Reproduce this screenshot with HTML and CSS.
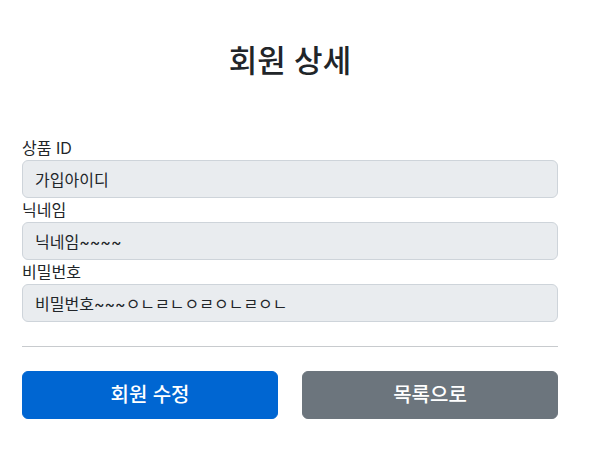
FILE: index.html
```html
<!DOCTYPE html>
<html lang="ko">
<head>
<meta charset="utf-8">
<title>회원 상세</title>
<link rel="stylesheet" href="styles.css">
</head>
<body>
<div class="container">
  <div class="page-header">
    <h2>회원 상세</h2>
  </div>
  <form class="detail-form">
    <div class="field">
      <label for="loginId">상품 ID</label>
      <input type="text" id="loginId" class="form-control" value="가입아이디" readonly>
    </div>
    <div class="field">
      <label for="nickname">닉네임</label>
      <input type="text" id="nickname" class="form-control" value="닉네임~~~~" readonly>
    </div>
    <div class="field">
      <label for="password">비밀번호</label>
      <input type="text" id="password" class="form-control" value="비밀번호~~~ㅇㄴㄹㄴㅇㄹㅇㄴㄹㅇㄴ" readonly>
    </div>
    <hr class="divider">
    <div class="actions">
      <button type="button" class="btn btn-primary">회원 수정</button>
      <button type="button" class="btn btn-secondary">목록으로</button>
    </div>
  </form>
</div>
</body>
</html>
```
FILE: styles.css
```css
* {
  box-sizing: border-box;
}

body {
  margin: 0;
  padding-right: 20px;
  background: #fff;
  color: #212529;
  font-family: "Inter", "Noto Sans CJK KR", "Noto Sans", sans-serif;
  font-size: 16px;
  line-height: 1.5;
}

.container {
  max-width: 560px;
  margin: 0 auto;
  padding: 0 12px;
}

.page-header {
  padding: 42px 0 56px;
  text-align: center;
}

.page-header h2 {
  margin: 0;
  font-size: 31px;
  font-weight: 500;
  line-height: 38px;
}

.detail-form {
  display: flex;
  flex-direction: column;
}

.field {
  display: flex;
  flex-direction: column;
}

.field label {
  display: block;
  font-size: 16px;
  line-height: 24px;
}

.form-control {
  display: block;
  width: 100%;
  height: 38px;
  padding: 6px 12px;
  font-family: inherit;
  font-size: 16px;
  line-height: 24px;
  color: #212529;
  background: #e9ecef;
  border: 1px solid #ced4da;
  border-radius: 6px;
  outline: none;
}

.divider {
  margin: 24px 0;
  border: 0;
  border-top: 1px solid #c8cbce;
  height: 0;
}

.actions {
  display: grid;
  grid-template-columns: 1fr 1fr;
  column-gap: 24px;
}

.btn {
  height: 48px;
  padding: 8px 16px;
  font-family: inherit;
  font-size: 20px;
  font-weight: 500;
  line-height: 30px;
  color: #fff;
  border: 1px solid transparent;
  border-radius: 6px;
  cursor: pointer;
}

.btn-primary {
  background: #0066d2;
  border-color: #0066d2;
}

.btn-secondary {
  background: #6c757d;
  border-color: #6c757d;
}
```
